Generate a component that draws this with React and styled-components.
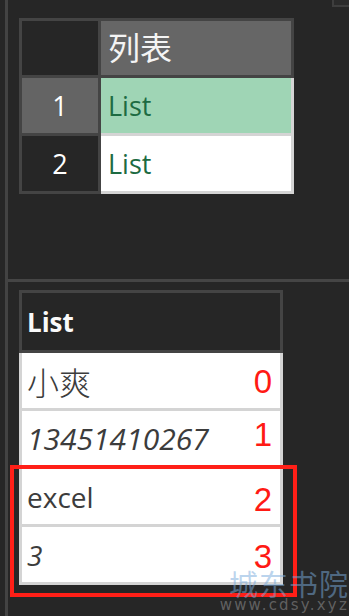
import styled, { createGlobalStyle } from "styled-components";

const GlobalStyle = createGlobalStyle`
  html, body {
    margin: 0;
    padding: 0;
    background: #262626;
  }
  * {
    box-sizing: border-box;
  }
`;

const UI_FONT = `"Open Sans", "Noto Sans CJK SC", sans-serif`;

const Page = styled.div`
  position: relative;
  display: flex;
  min-height: 616px;
  padding-left: 5px;
  background: #262626;
  font-family: ${UI_FONT};
  overflow: hidden;
`;

const Workspace = styled.div`
  flex: 1;
  display: flex;
  flex-direction: column;
  border-left: 3px solid #434343;
`;

const TopPane = styled.section`
  height: 282px;
  padding-left: 11px;
  border-bottom: 3px solid #454545;
  display: flex;
  flex-direction: column;
`;

const TopStrip = styled.div`
  height: 18px;
  display: flex;
  justify-content: flex-end;
  align-items: flex-start;
`;

const CornerTab = styled.div`
  width: 17px;
  height: 7px;
  background: #2b2b2b;
  border: 2px solid #3e3e3e;
  border-top: none;
  border-right: none;
`;

const SheetGrid = styled.div`
  display: grid;
  grid-template-columns: 79px 193px;
  grid-template-rows: 57px 58px 58px;
  width: 275px;
  border-top: 3px solid #444;
  border-left: 3px solid #444;
`;

const GridCell = styled.div`
  display: flex;
  align-items: center;
  justify-content: ${({ $center }) => ($center ? "center" : "flex-start")};
  padding-left: ${({ $center }) => ($center ? "0" : "7px")};
  background: ${({ $bg }) => $bg};
  color: ${({ $color }) => $color};
  border-right: 3px solid ${({ $line }) => $line};
  border-bottom: 3px solid ${({ $line }) => $line};
  font-size: ${({ $size }) => $size || "27px"};
  line-height: 1;
`;

const BottomPane = styled.section`
  padding: 8px 0 0 11px;
`;

const ListTable = styled.div`
  width: 264px;
  display: flex;
  flex-direction: column;
`;

const ListHeader = styled.div`
  height: 63px;
  display: flex;
  align-items: center;
  padding-left: 5px;
  border: 3px solid #444;
  background: #262626;
  color: #fafafa;
  font-weight: 700;
  font-size: 26px;
`;

const ListRow = styled.div`
  height: 58px;
  display: flex;
  align-items: center;
  justify-content: space-between;
  padding: 0 8px 0 5px;
  background: #fff;
  border: 3px solid #d4d4d4;
  border-top: none;
  color: #3c3c3c;
  font-size: ${({ $size }) => $size || "28px"};
  font-style: ${({ $italic }) => ($italic ? "italic" : "normal")};
  font-weight: ${({ $light }) => ($light ? 300 : 400)};
`;

const RowIndex = styled.span`
  font-family: "Liberation Sans", Arial, sans-serif;
  font-style: normal;
  font-weight: 400;
  font-size: 33px;
  color: #ff1a14;
  transform: translateY(${({ $shift }) => $shift || 0}px);
`;

const Highlight = styled.div`
  position: relative;

  &::after {
    content: "";
    position: absolute;
    top: -4px;
    left: -9px;
    right: -14px;
    bottom: -12px;
    border: 4px solid #ff1f17;
    pointer-events: none;
  }
`;

const Watermark = styled.div`
  position: absolute;
  right: 0;
  bottom: 3px;
  display: flex;
  flex-direction: column;
  align-items: flex-end;
  line-height: 1;
  pointer-events: none;
`;

const WatermarkTitle = styled.span`
  font-family: "Noto Sans CJK SC", sans-serif;
  font-size: 29px;
  letter-spacing: 1px;
  color: rgba(120, 170, 220, 0.5);
`;

const WatermarkUrl = styled.span`
  font-family: "DejaVu Sans", sans-serif;
  font-size: 15px;
  letter-spacing: 2.2px;
  color: rgba(130, 130, 130, 0.65);
`;

const rows = [
  { text: "小爽", light: true, size: "32px", shift: 1 },
  { text: "13451410267", italic: true, size: "30px", shift: -4 },
  { text: "excel", size: "28px", shift: 3 },
  { text: "3", italic: true, size: "28px", shift: 2 },
];

const App = () => {
  const renderRow = (row, i) => (
    <ListRow key={i} $italic={row.italic} $light={row.light} $size={row.size}>
      <span>{row.text}</span>
      <RowIndex $shift={row.shift}>{i}</RowIndex>
    </ListRow>
  );

  return (
    <>
      <GlobalStyle />
      <Page>
        <Workspace>
          <TopPane>
            <TopStrip>
              <CornerTab />
            </TopStrip>
            <SheetGrid>
              <GridCell $bg="#262626" $line="#444" />
              <GridCell $bg="#666" $color="#f4f4f4" $line="#444" $size="32px">
                列表
              </GridCell>
              <GridCell $center $bg="#646464" $color="#fff" $line="#444">
                1
              </GridCell>
              <GridCell $bg="#9fd5b5" $color="#1d6b42" $line="#d4d4d4">
                List
              </GridCell>
              <GridCell $center $bg="#262626" $color="#fff" $line="#444">
                2
              </GridCell>
              <GridCell $bg="#fff" $color="#1d6b42" $line="#d4d4d4">
                List
              </GridCell>
            </SheetGrid>
          </TopPane>
          <BottomPane>
            <ListTable>
              <ListHeader>List</ListHeader>
              {rows.slice(0, 2).map((row, i) => renderRow(row, i))}
              <Highlight>
                {rows.slice(2).map((row, i) => renderRow(row, i + 2))}
              </Highlight>
            </ListTable>
          </BottomPane>
        </Workspace>
        <Watermark>
          <WatermarkTitle>城东书院</WatermarkTitle>
          <WatermarkUrl>www.cdsy.xyz</WatermarkUrl>
        </Watermark>
      </Page>
    </>
  );
};

export default App;
